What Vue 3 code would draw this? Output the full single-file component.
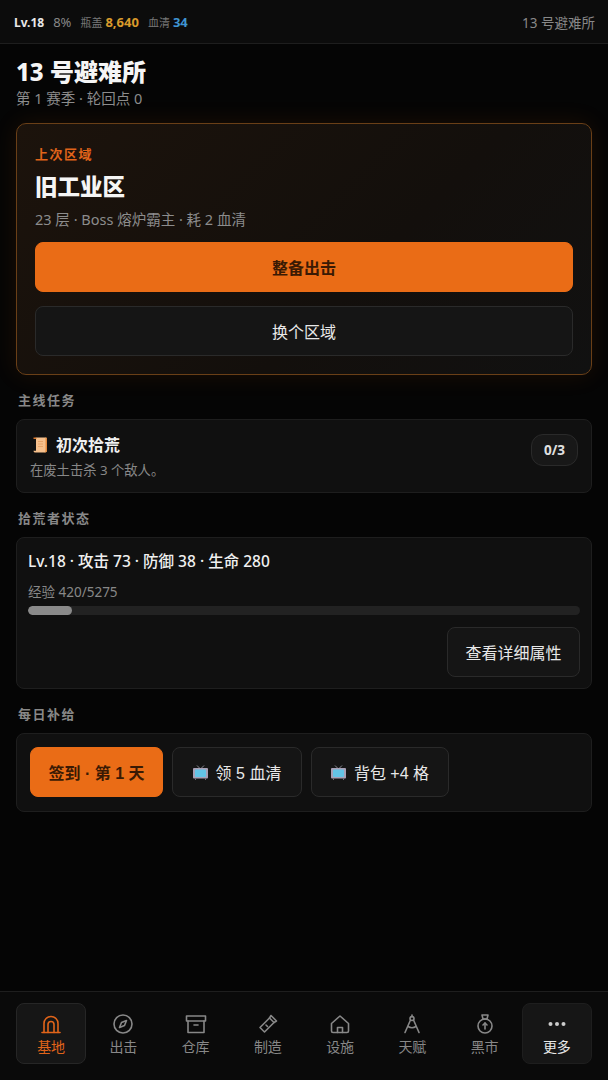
<template>
  <div class="app">
    <header class="topbar">
      <div class="stats">
        <span class="level">Lv.18</span>
        <span class="percent">8%</span>
        <span class="stat"><small>瓶盖</small><b class="caps">8,640</b></span>
        <span class="stat"><small>血清</small><b class="serum">34</b></span>
      </div>
      <span class="shelter-name">13 号避难所</span>
    </header>

    <main class="content">
      <div class="page-head">
        <h1>13 号避难所</h1>
        <p>第 1 赛季 · 轮回点 0</p>
      </div>

      <section class="hero">
        <div class="hero-tag">上次区域</div>
        <h2>旧工业区</h2>
        <p class="hero-desc">23 层 · Boss 熔炉霸主 · 耗 2 血清</p>
        <button class="btn primary big">整备出击</button>
        <button class="btn big">换个区域</button>
      </section>

      <div class="section-title">主线任务</div>
      <section class="card quest">
        <div>
          <div class="quest-title">
            <svg class="scroll" width="15" height="16" viewBox="0 0 15 16">
              <path d="M2 0.500h10.500c1 0 1.500 0.700 1.500 1.500v11.500c0 1.200-0.800 2-2 2H2.500c-1.200 0-2-0.800-2-1.800h2.500V2c0-0.800-0.400-1.500-1-1.500z" fill="#f6c08c" />
              <path d="M12.500 0.500c1 0 1.500 0.700 1.500 1.500v11.500c0 1.200-0.800 2-2 2h-1c1 0 1.500-0.800 1.500-2z" fill="#e58a3c" />
              <path d="M0.500 0.500h2c0.800 0 1 0.800 1 1.500H0.500z" fill="#d9772c" />
              <path d="M5 4.500h5M5 7h5M5 9.500h5" stroke="#e8a468" stroke-width="1" />
            </svg>
            初次拾荒
          </div>
          <div class="quest-desc">在废土击杀 3 个敌人。</div>
        </div>
        <span class="badge">0/3</span>
      </section>

      <div class="section-title">拾荒者状态</div>
      <section class="card status">
        <div class="status-line">Lv.18 · 攻击 73 · 防御 38 · 生命 280</div>
        <div class="exp-label">经验 420/5275</div>
        <div class="bar"><div class="bar-fill" :style="{ width: expPercent + '%' }"></div></div>
        <div class="status-foot">
          <button class="btn detail">查看详细属性</button>
        </div>
      </section>

      <div class="section-title">每日补给</div>
      <section class="card daily">
        <button class="btn primary supply sign">签到 · 第 1 天</button>
        <button v-for="ad in adButtons" :key="ad" class="btn supply ad">
          <svg width="15" height="15" viewBox="0 0 15 15">
            <path d="M4 0.500l3 3M11 0.500l-3 3" stroke="#8a8a94" stroke-width="1" fill="none" />
            <rect x="0" y="3" width="15" height="10.500" rx="1" fill="#a8a0b6" />
            <rect x="2" y="4.500" width="11" height="7.500" rx="1" fill="#63c4e6" />
            <path d="M2.500 13.500v1.500M12.500 13.500v1.500" stroke="#6e6e78" stroke-width="1" />
          </svg>
          {{ ad }}
        </button>
      </section>
    </main>

    <nav class="tabbar">
      <div
        v-for="tab in tabs"
        :key="tab.label"
        class="tab"
        :class="{ active: tab.active, more: tab.more }"
      >
        <svg width="24" height="24" viewBox="0 0 24 24" fill="none" stroke="currentColor" stroke-width="1.600" stroke-linecap="round" stroke-linejoin="round">
          <path v-for="d in tab.paths" :key="d" :d="d" />
          <circle v-for="c in tab.circles" :key="c[0]" :cx="c[0]" :cy="c[1]" :r="c[2]" :fill="tab.more ? 'currentColor' : 'none'" :stroke="tab.more ? 'none' : 'currentColor'" />
        </svg>
        <span>{{ tab.label }}</span>
      </div>
    </nav>
  </div>
</template>

<script setup>
const expPercent = (420 / 5275) * 100

const adButtons = ['领 5 血清', '背包 +4 格']

const tabs = [
  {
    label: '基地',
    active: true,
    paths: ['M3 20.500h18', 'M5 20.500v-9a7 7 0 0 1 14 0v9', 'M9 20.500v-8a3 3 0 0 1 6 0v8'],
  },
  {
    label: '出击',
    paths: ['M15.500 8.500l-2 5-5 2 2-5z'],
    circles: [[12, 12, 9]],
  },
  {
    label: '仓库',
    paths: ['M2.500 4h19v5h-19z', 'M4 9v11.500h16V9', 'M10 13h4'],
  },
  {
    label: '制造',
    paths: ['M15 3.500l5.500 5.500-2.500 1.500-4.500-4.500z', 'M13.500 6l-9.500 9.500 4.500 4.500 9.500-9.500', 'M10 13l1.500 1.500'],
  },
  {
    label: '设施',
    paths: ['M3.500 11.500L12 4l8.500 7.500V19a1.500 1.500 0 0 1-1.500 1.500H5A1.500 1.500 0 0 1 3.500 19z', 'M9.500 20.500v-5h5v5'],
  },
  {
    label: '天赋',
    paths: ['M10.500 8L5 20.500', 'M13.500 8L19 20.500', 'M8 14.500c2.500 1.500 5.500 1.500 8 0', 'M12 3v2'],
    circles: [[12, 6.500, 2]],
  },
  {
    label: '黑市',
    paths: ['M9 3h6l-1 4h-4z', 'M12 11v6', 'M10 13l2-2 2 2'],
    circles: [[12, 14, 7]],
  },
  {
    label: '更多',
    more: true,
    circles: [[5.500, 12, 2], [12, 12, 2], [18.500, 12, 2]],
  },
]
</script>

<style>
html,
body {
  margin: 0;
  background: #050505;
}
</style>

<style scoped>
.app {
  width: 608px;
  height: 1080px;
  display: flex;
  flex-direction: column;
  overflow: hidden;
  background: #050505;
  color: #e8e8e8;
  font-family: "Noto Sans", "Noto Sans CJK SC", sans-serif;
}

.topbar {
  height: 43px;
  flex: none;
  display: flex;
  align-items: center;
  justify-content: space-between;
  padding: 0 13px 0 14px;
  background: #0c0c0c;
  border-bottom: 1px solid #1e1e1e;
  font-size: 13px;
}

.stats {
  display: flex;
  align-items: baseline;
  gap: 9px;
}

.level {
  font-size: 12px;
  font-weight: 700;
  color: #e8e8e8;
}

.percent {
  color: #888;
}

.stat {
  display: flex;
  align-items: baseline;
  gap: 3px;
}

.stat small {
  font-size: 11px;
  color: #777;
}

.stat b {
  font-size: 13px;
  font-weight: 700;
}

.caps {
  color: #d99a2b;
}

.serum {
  color: #3f94d1;
}

.shelter-name {
  font-size: 13.500px;
  color: #888;
}

.content {
  flex: 1;
  padding: 14px 16px 0;
}

.page-head h1 {
  margin: 0;
  font-size: 24px;
  line-height: 28px;
  font-weight: 800;
  color: #f5f5f5;
}

.page-head p {
  margin: 2px 0 0;
  font-size: 14.500px;
  line-height: 20px;
  color: #8c8c8c;
}

.hero {
  margin-top: 15px;
  height: 252px;
  box-sizing: border-box;
  padding: 20px 18px;
  border: 1px solid #6a3f17;
  border-radius: 10px;
  background: linear-gradient(135deg, #1c130c, #130f0c 60%, #111);
  box-shadow: 0 0 24px rgba(234, 108, 22, 0.1);
}

.hero-tag {
  font-size: 13px;
  line-height: 20px;
  font-weight: 700;
  letter-spacing: 1.500px;
  color: #e0641a;
}

.hero h2 {
  margin: 8px 0 0;
  font-size: 22.500px;
  line-height: 30px;
  font-weight: 800;
  color: #f5f5f5;
}

.hero-desc {
  margin: 7px 0 0;
  font-size: 14.500px;
  line-height: 20px;
  color: #8c8c8c;
}

.btn {
  box-sizing: border-box;
  border: 1px solid #2a2a2a;
  border-radius: 8px;
  background: #151515;
  color: #e8e8e8;
  font-family: "Liberation Sans", "Noto Sans CJK SC", sans-serif;
  font-size: 16px;
}

.btn.primary {
  border-color: #ea6c16;
  background: #ea6c16;
  color: #3a1a04;
  font-weight: 700;
}

.big {
  display: block;
  width: 100%;
  height: 50px;
}

.hero-desc + .big {
  margin-top: 13px;
}

.big + .big {
  margin-top: 14px;
}

.section-title {
  margin-top: 15px;
  padding-left: 2px;
  font-size: 13px;
  line-height: 20px;
  font-weight: 700;
  letter-spacing: 1.500px;
  color: #888;
}

.card {
  margin-top: 9px;
  box-sizing: border-box;
  border: 1px solid #1e1e1e;
  border-radius: 8px;
  background: #101010;
}

.quest {
  height: 74px;
  padding: 14px 13px 0;
  display: flex;
  justify-content: space-between;
  align-items: flex-start;
}

.quest-title {
  display: flex;
  align-items: center;
  gap: 8px;
  font-size: 16px;
  line-height: 22px;
  font-weight: 700;
  color: #f0f0f0;
}

.scroll {
  margin-left: 3px;
}

.quest-desc {
  margin-top: 4px;
  font-size: 13.300px;
  line-height: 20px;
  color: #888;
}

.badge {
  height: 32px;
  box-sizing: border-box;
  padding: 0 12px;
  display: flex;
  align-items: center;
  border: 1px solid #2a2a2a;
  border-radius: 12px;
  background: #181818;
  font-size: 13.500px;
  font-weight: 700;
  color: #e0e0e0;
}

.status {
  height: 152px;
  padding: 11px 11px 0;
}

.status-line {
  font-size: 15.500px;
  line-height: 24px;
  font-weight: 500;
  color: #f0f0f0;
}

.exp-label {
  margin-top: 9px;
  font-size: 13.500px;
  line-height: 20px;
  color: #888;
}

.bar {
  margin-top: 4px;
  height: 9px;
  border-radius: 5px;
  background: #222;
  overflow: hidden;
}

.bar-fill {
  height: 100%;
  border-radius: 5px;
  background: #8a8a8a;
}

.status-foot {
  margin-top: 12px;
  display: flex;
  justify-content: flex-end;
}

.detail {
  height: 50px;
  width: 133px;
  padding: 0;
}

.daily {
  height: 79px;
  padding: 13px;
  display: flex;
  gap: 9px;
}

.supply {
  height: 50px;
  padding: 0;
}

.sign {
  width: 133px;
}

.ad {
  width: 130px;
  display: flex;
  align-items: center;
  justify-content: center;
  gap: 8px;
}

.ad:last-child {
  width: 138px;
}

.tabbar {
  height: 89px;
  flex: none;
  box-sizing: border-box;
  padding: 11px 16px 16px;
  display: grid;
  grid-template-columns: repeat(8, 1fr);
  gap: 2px;
  background: #0a0a0a;
  border-top: 1px solid #1e1e1e;
}

.tab {
  display: flex;
  flex-direction: column;
  align-items: center;
  justify-content: center;
  gap: 2px;
  border: 1px solid transparent;
  border-radius: 8px;
  font-size: 14px;
  line-height: 18px;
  color: #888;
}

.tab.active {
  color: #e0641a;
  background: #161616;
  border-color: #262626;
}

.tab.more {
  color: #e8e8e8;
  background: #161616;
  border-color: #1e1e1e;
}

.tab.more svg {
  color: #ccc;
}
</style>
